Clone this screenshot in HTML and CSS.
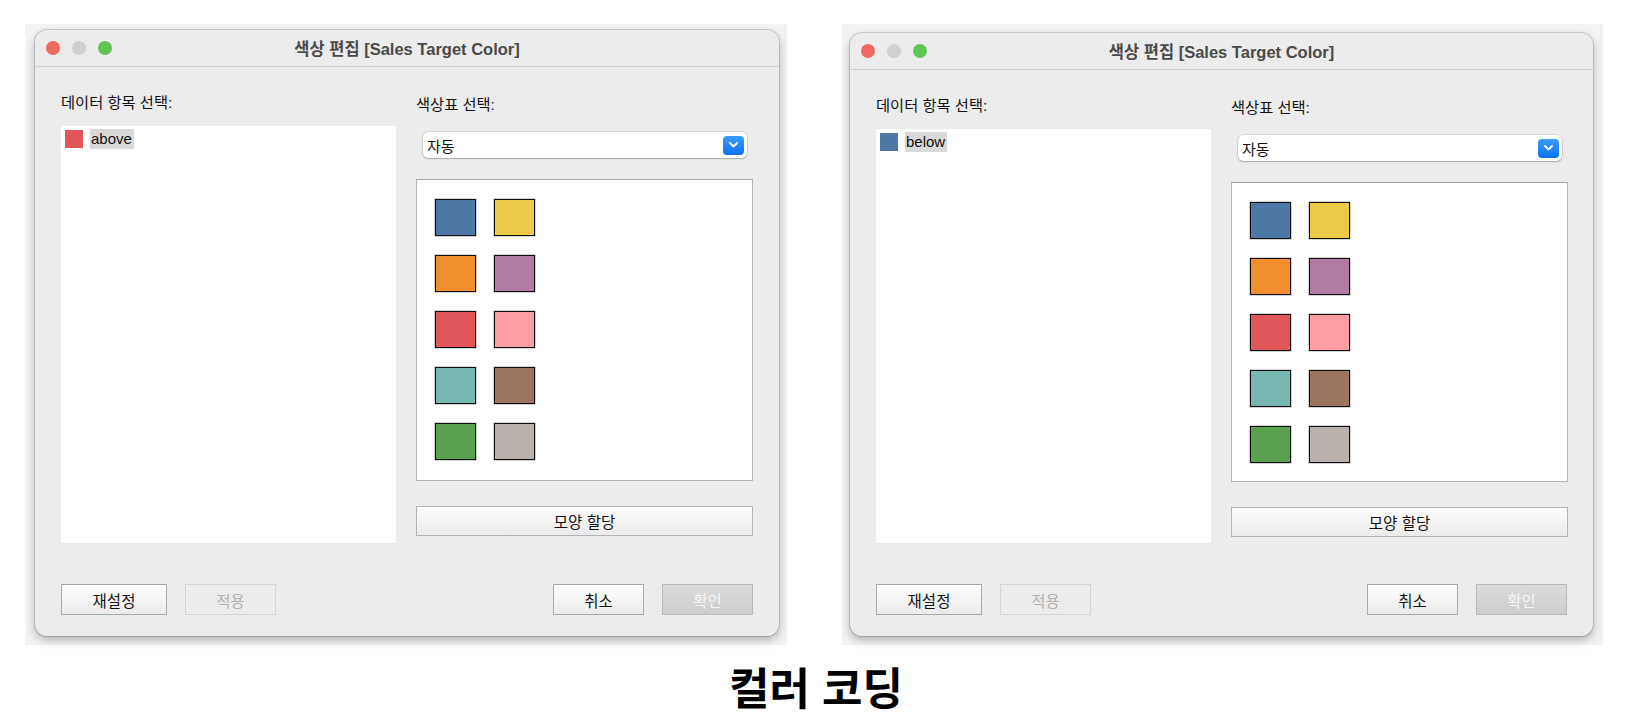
FILE: index.html
```html
<!DOCTYPE html>
<html lang="ko">
<head>
    <meta charset="UTF-8">
    <meta name="viewport" content="width=device-width, initial-scale=1.0">
    <title>컬러 코딩</title>
    <link rel="stylesheet" href="styles.css">
</head>
<body>
    <div class="shots">
        <div class="shot shot-a">
            <div class="window">
                <div class="titlebar">
                    <div class="lights">
                        <span class="light red"></span>
                        <span class="light gray"></span>
                        <span class="light green"></span>
                    </div>
                    <div class="title">색상 편집 [Sales Target Color]</div>
                    <div></div>
                </div>
                <div class="content">
                    <div class="col">
                        <div class="label">데이터 항목 선택:</div>
                        <div class="list">
                            <div class="item">
                                <span class="chip c-red"></span>
                                <span class="item-name">above</span>
                            </div>
                        </div>
                    </div>
                    <div class="col">
                        <div class="label label-right">색상표 선택:</div>
                        <div class="select">
                            <span>자동</span>
                            <span class="select-btn">
                                <svg width="9" height="6" viewBox="0 0 9 6"><path d="M1 1l3.5 3.5L8 1" fill="none" stroke="#fff" stroke-width="1.8" stroke-linecap="round" stroke-linejoin="round"/></svg>
                            </span>
                        </div>
                        <div class="palette">
                            <span class="swatch c-blue"></span>
                            <span class="swatch c-yellow"></span>
                            <span class="swatch c-orange"></span>
                            <span class="swatch c-purple"></span>
                            <span class="swatch c-red"></span>
                            <span class="swatch c-pink"></span>
                            <span class="swatch c-teal"></span>
                            <span class="swatch c-brown"></span>
                            <span class="swatch c-green"></span>
                            <span class="swatch c-gray"></span>
                        </div>
                        <button class="btn btn-wide">모양 할당</button>
                    </div>
                </div>
                <div class="actions">
                    <div class="group">
                        <button class="btn btn-reset">재설정</button>
                        <button class="btn btn-off">적용</button>
                    </div>
                    <div class="group">
                        <button class="btn">취소</button>
                        <button class="btn btn-ok">확인</button>
                    </div>
                </div>
            </div>
        </div>

        <div class="shot shot-b">
            <div class="window">
                <div class="titlebar">
                    <div class="lights">
                        <span class="light red"></span>
                        <span class="light gray"></span>
                        <span class="light green"></span>
                    </div>
                    <div class="title">색상 편집 [Sales Target Color]</div>
                    <div></div>
                </div>
                <div class="content">
                    <div class="col">
                        <div class="label">데이터 항목 선택:</div>
                        <div class="list">
                            <div class="item">
                                <span class="chip c-blue"></span>
                                <span class="item-name">below</span>
                            </div>
                        </div>
                    </div>
                    <div class="col">
                        <div class="label label-right">색상표 선택:</div>
                        <div class="select">
                            <span>자동</span>
                            <span class="select-btn">
                                <svg width="9" height="6" viewBox="0 0 9 6"><path d="M1 1l3.5 3.5L8 1" fill="none" stroke="#fff" stroke-width="1.8" stroke-linecap="round" stroke-linejoin="round"/></svg>
                            </span>
                        </div>
                        <div class="palette">
                            <span class="swatch c-blue"></span>
                            <span class="swatch c-yellow"></span>
                            <span class="swatch c-orange"></span>
                            <span class="swatch c-purple"></span>
                            <span class="swatch c-red"></span>
                            <span class="swatch c-pink"></span>
                            <span class="swatch c-teal"></span>
                            <span class="swatch c-brown"></span>
                            <span class="swatch c-green"></span>
                            <span class="swatch c-gray"></span>
                        </div>
                        <button class="btn btn-wide">모양 할당</button>
                    </div>
                </div>
                <div class="actions">
                    <div class="group">
                        <button class="btn btn-reset">재설정</button>
                        <button class="btn btn-off">적용</button>
                    </div>
                    <div class="group">
                        <button class="btn">취소</button>
                        <button class="btn btn-ok">확인</button>
                    </div>
                </div>
            </div>
        </div>
    </div>

    <h1 class="caption">컬러 코딩</h1>
</body>
</html>
```

FILE: styles.css
```css
body {
    margin: 0;
    background-color: #ffffff;
    font-family: "Liberation Sans", "Noto Sans CJK KR", sans-serif;
    color: #111111;
}

.shots {
    display: flex;
    gap: 55px;
    padding: 24px 0 0 25px;
}

.shot {
    background-color: #f3f3f3;
}

.shot-a {
    padding: 6px 8px 9px 10px;
}

.shot-b {
    padding: 9px 10px 8px 8px;
}

.window {
    width: 744px;
    background-color: #ececec;
    border-radius: 12px;
    box-shadow: 0 0 0 1px rgba(0, 0, 0, 0.14), 0 4px 10px rgba(0, 0, 0, 0.28);
    overflow: hidden;
}

.shot-b .window {
    width: 743px;
}

.titlebar {
    display: grid;
    grid-template-columns: 1fr auto 1fr;
    align-items: center;
    height: 36px;
    border-bottom: 1px solid #d2d2d2;
}

.lights {
    display: flex;
    gap: 12px;
    padding-left: 11px;
}

.light {
    width: 14px;
    height: 14px;
    border-radius: 50%;
}

.light.red { background-color: #ee6a5e; }
.light.gray { background-color: #d0d0d0; }
.light.green { background-color: #61c554; }

.title {
    font-size: 16.5px;
    font-weight: bold;
    color: #4a4a4a;
}

.content {
    display: grid;
    grid-template-columns: 335px 337px;
    gap: 20px;
    padding: 0 26px;
}

.label {
    font-size: 15.3px;
    line-height: 20px;
    margin-top: 26px;
}

.label-right {
    margin-top: 28px;
}

.list {
    background-color: #ffffff;
    height: 417px;
    margin-top: 13px;
}

.shot-b .list {
    height: 414px;
}

.item {
    display: flex;
    align-items: center;
    gap: 7px;
    padding: 3px 4px;
}

.chip {
    width: 18px;
    height: 18px;
}

.item-name {
    font-size: 15px;
    line-height: 20px;
    background-color: #d9d9d9;
    padding: 0 2px 0 1px;
}

.select {
    display: flex;
    align-items: center;
    justify-content: space-between;
    height: 26px;
    margin: 17px 6px 0 7px;
    padding: 0 3px 0 4px;
    background-color: #ffffff;
    border-radius: 5px;
    box-shadow: 0 0 0 0.5px rgba(0, 0, 0, 0.18), 0 1px 1.5px rgba(0, 0, 0, 0.22);
    font-size: 15px;
}

.select-btn {
    display: flex;
    align-items: center;
    justify-content: center;
    width: 21px;
    height: 19px;
    border-radius: 4px;
    background: linear-gradient(#3c9cff, #0b72f4);
}

.palette {
    display: grid;
    grid-template-columns: repeat(2, 41px);
    grid-auto-rows: 37px;
    column-gap: 18px;
    row-gap: 19px;
    height: 302px;
    box-sizing: border-box;
    margin-top: 21px;
    padding: 19px 18px;
    background-color: #ffffff;
    border: 1px solid #b5b5b5;
    border-top-color: #a8a8a8;
}

.shot-b .palette {
    height: 300px;
}

.swatch {
    box-sizing: border-box;
    border: 1px solid #0d0d0d;
    box-shadow: 0 0 0 0.5px rgba(0, 0, 0, 0.35);
}

.c-blue { background-color: #4e79a7; }
.c-yellow { background-color: #edc948; }
.c-orange { background-color: #f28e2b; }
.c-purple { background-color: #b07aa1; }
.c-red { background-color: #e15759; }
.c-pink { background-color: #ff9da7; }
.c-teal { background-color: #76b7b2; }
.c-brown { background-color: #9c755f; }
.c-green { background-color: #59a14f; }
.c-gray { background-color: #bab0ac; }

.btn {
    height: 31px;
    width: 91px;
    padding: 0;
    font-family: inherit;
    font-size: 15.5px;
    color: #111111;
    background: linear-gradient(#fdfdfd, #ebebeb);
    border: 1px solid #a9a9a9;
}

.btn-wide {
    display: block;
    width: 100%;
    height: 30px;
    margin-top: 25px;
    border-color: #b3b3b3;
}

.btn-reset {
    width: 106px;
}

.btn-off {
    color: #b3b3b3;
    background: #ececec;
    border-color: #d5d5d5;
}

.btn-ok {
    color: #f6f6f6;
    background: linear-gradient(#dcdcdc, #cdcdcd);
    border-color: #b8b8b8;
}

.actions {
    display: flex;
    justify-content: space-between;
    padding: 41px 26px 21px;
}

.group {
    display: flex;
    gap: 18px;
}

.caption {
    margin: 19px 0 0;
    text-align: center;
    font-size: 44px;
    line-height: 52px;
    font-weight: bold;
    color: #000000;
}
```
